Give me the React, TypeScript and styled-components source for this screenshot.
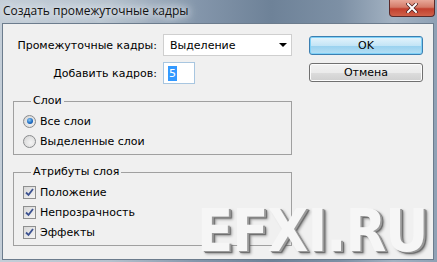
import React from 'react';
import styled, { createGlobalStyle } from 'styled-components';

const GlobalStyle = createGlobalStyle`
  html, body { margin: 0; padding: 0; background: #fff; }
  body { width: 437px; height: 262px; overflow: hidden; }
`;

const Window = styled.div`
  position: relative;
  width: 437px;
  height: 262px;
  box-sizing: border-box;
  display: flex;
  flex-direction: column;
  padding: 0 3px 2px 2px;
  background: linear-gradient(90deg, #c4ced8 0%, #b6c2ce 25%, #8496ab 45%, #6e8298 62%, #7d90a5 78%, #a3b2c2 90%, #8fa1b5 100%);
`;

const TitleBar = styled.div`
  height: 23px;
  display: flex;
  align-items: center;
  justify-content: space-between;
  padding-left: 1px;
`;

const Title = styled.span`
  font-family: "Open Sans", "Noto Sans", sans-serif;
  font-size: 12px;
  color: #111;
  margin-top: -2px;
  text-shadow: 0 0 6px #e8edf2, 0 0 10px #e8edf2, 0 0 14px #dde4ea;
`;

const CloseButton = styled.div`
  align-self: flex-start;
  width: 46px;
  height: 17px;
  margin-right: -1px;
  box-sizing: border-box;
  border: 1px solid #5a2a2a;
  border-top: none;
  border-radius: 0 0 4px 4px;
  background: linear-gradient(180deg, #e8a899 0%, #d47a68 45%, #c2402e 55%, #d0614a 100%);
  display: flex;
  align-items: center;
  justify-content: center;
`;

const Client = styled.div`
  flex: 1;
  display: flex;
  border: 1px solid #6c7c8d;
  background: #f0f0f0;
  padding: 10px 10px 0 10px;
  font-family: "DejaVu Sans", sans-serif;
  font-size: 11px;
  color: #000;
`;

const LeftColumn = styled.div`
  width: 279px;
  display: flex;
  flex-direction: column;
`;

const FormGrid = styled.div`
  display: grid;
  grid-template-columns: 144px auto;
  column-gap: 6px;
  row-gap: 6px;
  align-items: center;
`;

const Label = styled.span`
  text-align: right;
  white-space: nowrap;
`;

const Select = styled.div`
  width: 129px;
  height: 22px;
  box-sizing: border-box;
  border: 1px solid #cfcfcf;
  background: #fff;
  display: flex;
  align-items: center;
  justify-content: space-between;
  padding: 0 4px 0 6px;
`;

const Arrow = styled.span`
  width: 0;
  height: 0;
  border-left: 4px solid transparent;
  border-right: 4px solid transparent;
  border-top: 4px solid #000;
`;

const NumberInput = styled.div`
  width: 32px;
  height: 22px;
  box-sizing: border-box;
  border: 1px solid #a8c6e0;
  background: #fff;
  display: flex;
  align-items: center;
  padding-left: 4px;
`;

const Selected = styled.span`
  background: #3399ff;
  color: #fff;
  padding: 1px 1px;
  line-height: 13px;
`;

const Group = styled.fieldset<{ $top: number }>`
  margin: ${p => p.$top}px 0 0 0;
  padding: 3px 9px 3px 9px;
  border: 1px solid #a0a0a0;
  min-width: 0;
`;

const Legend = styled.legend`
  margin-left: 8px;
  padding: 0 2px;
  line-height: 14px;
`;

const OptionRow = styled.label`
  display: flex;
  align-items: center;
  gap: 4px;
  height: 20px;
`;

const Radio = styled.span<{ $on?: boolean }>`
  width: 13px;
  height: 13px;
  box-sizing: border-box;
  border-radius: 50%;
  border: 1px solid #8a8c8e;
  background: radial-gradient(circle at 60% 60%, #f4f4f4 0%, #dcdcdc 70%, #c8c8c8 100%);
  display: flex;
  align-items: center;
  justify-content: center;
  &::after {
    content: '';
    display: ${p => (p.$on ? 'block' : 'none')};
    width: 6px;
    height: 6px;
    border-radius: 50%;
    background: radial-gradient(circle at 40% 35%, #8fcaf5 0%, #1f6fc4 55%, #0e3a8a 100%);
  }
`;

const Checkbox = styled.span`
  width: 13px;
  height: 13px;
  box-sizing: border-box;
  border: 1px solid #8e8f8f;
  background: linear-gradient(135deg, #d8d8d8 0%, #f4f4f4 100%);
  display: flex;
  align-items: center;
  justify-content: center;
`;

const RightColumn = styled.div`
  margin-left: 17px;
  padding-top: 2px;
  display: flex;
  flex-direction: column;
  gap: 8px;
`;

const Button = styled.div<{ $default?: boolean }>`
  width: 114px;
  height: 19px;
  box-sizing: border-box;
  border-radius: 3px;
  border: 1px solid ${p => (p.$default ? '#3c7fb1' : '#707070')};
  background: ${p =>
    p.$default
      ? 'linear-gradient(180deg, #e5f4fc 0%, #c4e5f6 50%, #98d1ef 51%, #b6dff4 100%)'
      : 'linear-gradient(180deg, #f2f2f2 0%, #ebebeb 50%, #dddddd 51%, #cfcfcf 100%)'};
  box-shadow: inset 0 0 0 1px ${p => (p.$default ? '#7fd1f7' : '#fcfcfc')};
  display: flex;
  align-items: center;
  justify-content: center;
`;

const Watermark = styled.div`
  position: absolute;
  left: 197px;
  top: 201px;
  width: max-content;
  font-family: "DejaVu Sans Condensed", "DejaVu Sans", sans-serif;
  font-weight: bold;
  font-size: 59px;
  line-height: 59px;
  letter-spacing: -1px;
  white-space: nowrap;
  color: #f6f6f6;
  text-shadow: 2px 1px 0 #9a9a9a, 3px 2px 1px #6a6a6a, 4px 3px 3px rgba(0, 0, 0, 0.35);
  pointer-events: none;
`;

function CheckMark() {
  return (
    <svg width="9" height="9" viewBox="0 0 9 9">
      <path d="M1 4.5 L3.5 7 L8 1" fill="none" stroke="#3d5391" strokeWidth="1.8" />
    </svg>
  );
}

export default function App() {
  return (
    <React.Fragment>
      <GlobalStyle />
      <Window>
        <TitleBar>
          <Title>Создать промежуточные кадры</Title>
          <CloseButton>
            <svg width="12" height="10" viewBox="0 0 12 10">
              <path d="M2 1 L10 9 M10 1 L2 9" stroke="#4a1e1e" strokeWidth="3.4" strokeLinecap="square" />
              <path d="M2 1 L10 9 M10 1 L2 9" stroke="#fff" strokeWidth="2" strokeLinecap="square" />
            </svg>
          </CloseButton>
        </TitleBar>
        <Client>
          <LeftColumn>
            <FormGrid>
              <Label>Промежуточные кадры:</Label>
              <Select>
                <span>Выделение</span>
                <Arrow />
              </Select>
              <Label>Добавить кадров:</Label>
              <NumberInput>
                <Selected>5</Selected>
              </NumberInput>
            </FormGrid>
            <Group $top={10}>
              <Legend>Слои</Legend>
              <OptionRow>
                <Radio $on />
                Все слои
              </OptionRow>
              <OptionRow>
                <Radio />
                Выделенные слои
              </OptionRow>
            </Group>
            <Group $top={10}>
              <Legend>Атрибуты слоя</Legend>
              <OptionRow>
                <Checkbox><CheckMark /></Checkbox>
                Положение
              </OptionRow>
              <OptionRow>
                <Checkbox><CheckMark /></Checkbox>
                Непрозрачность
              </OptionRow>
              <OptionRow>
                <Checkbox><CheckMark /></Checkbox>
                Эффекты
              </OptionRow>
            </Group>
          </LeftColumn>
          <RightColumn>
            <Button $default>OK</Button>
            <Button>Отмена</Button>
          </RightColumn>
        </Client>
        <Watermark>EFXI.RU</Watermark>
      </Window>
    </React.Fragment>
  );
}
